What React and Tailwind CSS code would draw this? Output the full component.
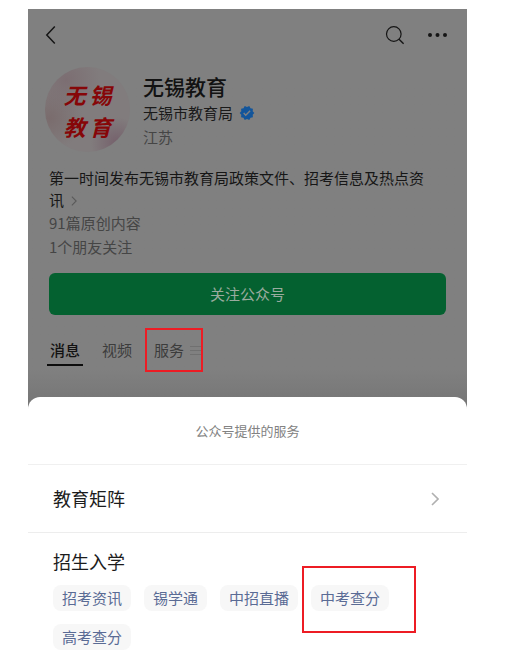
import React from 'react'
import { MdVerified } from 'react-icons/md'

const tabs = ['消息', '视频', '服务']
const services = ['招考资讯', '锡学通', '中招直播', '中考查分', '高考查分']

function Chevron({ className }) {
  return (
    <svg viewBox="0 0 8 14" fill="none" stroke="currentColor" className={className} aria-hidden="true">
      <path d="M1 1l6 6-6 6" strokeWidth="1.6" />
    </svg>
  )
}

function TopBar() {
  return (
    <header className="flex h-[52px] items-center px-[17px] text-[#151515]">
      <button aria-label="返回" className="flex">
        <svg viewBox="0 0 12 20" fill="none" stroke="currentColor" className="h-5 w-3" aria-hidden="true">
          <path d="M9.8 1.6L1.8 10l8 8.4" strokeWidth="1.5" />
        </svg>
      </button>
      <button aria-label="搜索" className="ml-auto flex">
        <svg viewBox="0 0 20 20" fill="none" stroke="currentColor" className="size-5" aria-hidden="true">
          <circle cx="8.8" cy="9" r="7.3" strokeWidth="1.2" />
          <path d="M14 14.2l4.6 4.5" strokeWidth="1.4" />
        </svg>
      </button>
      <button aria-label="更多" className="ml-[21px] flex">
        <svg viewBox="0 0 24 20" fill="currentColor" className="h-5 w-6" aria-hidden="true">
          <circle cx="4" cy="10" r="2" />
          <circle cx="11.5" cy="10" r="2" />
          <circle cx="19" cy="10" r="2" />
        </svg>
      </button>
    </header>
  )
}

function Avatar() {
  return (
    <div className="flex size-[85px] shrink-0 flex-col items-center justify-center rounded-full bg-[#817c7d] bg-[radial-gradient(circle_at_25%_15%,#7c6e72,transparent_35%),radial-gradient(circle_at_85%_90%,#75606b,transparent_25%),radial-gradient(circle_at_5%_60%,#7a6c6d,transparent_35%)] text-[22px] leading-8 font-bold text-[#860608] italic">
      <p className="flex gap-1"><span>无</span><span>锡</span></p>
      <p className="flex gap-1"><span>教</span><span>育</span></p>
    </div>
  )
}

function Profile() {
  return (
    <section className="px-[21px] pt-[6px]">
      <div className="-ml-1 flex items-center gap-[13px]">
        <Avatar />
        <div>
          <h1 className="text-[21px] leading-7 font-medium text-[#121212]">无锡教育</h1>
          <p className="flex items-center gap-[6px] leading-[26px] text-[#1a1a1a]">
            无锡市教育局
            <MdVerified className="size-4 text-[#12559b]" />
          </p>
          <p className="leading-[22px] text-[#454545]">江苏</p>
        </div>
      </div>
      <p className="mt-[15px] pr-3 leading-[22px] text-[#161616]">
        第一时间发布无锡市教育局政策文件、招考信息及热点资讯
        <Chevron className="ml-[7px] inline h-[10px] w-[6px] align-baseline text-[#5a5a5a]" />
      </p>
      <p className="leading-6 text-[#454545]">91篇原创内容</p>
      <p className="leading-6 text-[#454545]">1个朋友关注</p>
      <button className="mt-[14px] h-[42px] w-full rounded-md bg-[#046130] text-[#9aab9f]">
        关注公众号
      </button>
    </section>
  )
}

function Tabs() {
  return (
    <nav className="mt-[21px] flex gap-4 px-[19px]">
      {tabs.map((tab, i) => (
        <a
          key={tab}
          href={'#tab' + i}
          className={
            i === 0
              ? 'border-b-2 border-[#0d0d0d] px-[3px] leading-7 font-medium text-[#121212]'
              : 'relative flex items-center border-b-2 border-transparent px-[3px] leading-7 text-[#3c3c3c]'
          }
        >
          {tab}
          {i === 2 && (
            <>
              <svg viewBox="0 0 11 11" stroke="#707070" className="ml-[6px] size-[11px]" aria-hidden="true">
                <path d="M0 1.5h11M0 5.5h11M0 9.5h11" />
              </svg>
              <span className="pointer-events-none absolute -top-2 right-px -bottom-2 -left-[6px] border-2 border-[#ed1c24]" />
            </>
          )}
        </a>
      ))}
    </nav>
  )
}

function ServiceSheet() {
  return (
    <section className="relative -mt-3 rounded-t-xl bg-white pb-[10px]">
      <h2 className="border-b border-[#f0f0f0] text-center text-[13px] leading-[67px] text-[#828282]">公众号提供的服务</h2>
      <a href="#matrix" className="flex items-center justify-between border-b border-[#ededed] px-[25px] text-[18px] leading-[67px] text-[#1c1c1c]">
        教育矩阵
        <Chevron className="mr-[3px] h-[14px] w-2 text-[#b0b0b0]" />
      </a>
      <div className="px-[25px] pt-[14px]">
        <h3 className="text-[18px] leading-7 text-[#1c1c1c]">招生入学</h3>
        <ul className="mt-[10px] flex flex-wrap gap-[13px]">
          {services.map(name => (
            <li key={name} className="relative">
              <a href={'#' + name} className="block rounded-lg bg-[#f7f7f7] px-[9px] leading-[26px] text-[#5a6b95]">
                {name}
              </a>
              {name === '中考查分' && (
                <span className="pointer-events-none absolute -top-[19px] -right-[27px] -bottom-[22px] -left-[9px] border-2 border-[#ed1c24]" />
              )}
            </li>
          ))}
        </ul>
      </div>
    </section>
  )
}

export default function App() {
  return (
    <main className="min-h-screen bg-white pt-[9px] pr-11 pl-7 font-['Noto_Sans_CJK_SC',sans-serif] text-[15px]">
      <div className="bg-[#808080] bg-linear-to-b from-[#808080] from-90% to-[#757575] pb-[43px]">
        <TopBar />
        <Profile />
        <Tabs />
      </div>
      <ServiceSheet />
    </main>
  )
}
